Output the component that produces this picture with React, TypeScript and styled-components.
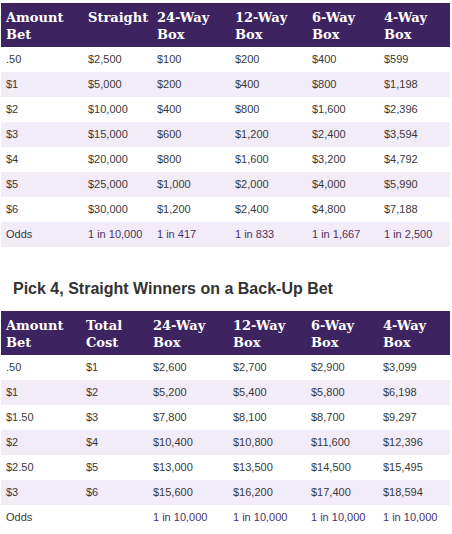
import React from "react";
import styled, { createGlobalStyle } from "styled-components";

const Global = createGlobalStyle`
  html, body { margin: 0; padding: 0; background: #fff; }
  body { font-family: "Liberation Sans", Arial, sans-serif; }
`;

const Page = styled.div`
  padding: 3px 0 0 1px;
  width: 449px;
`;

const Table = styled.div<{ $cols: string }>`
  display: grid;
  grid-template-columns: ${(p) => p.$cols};
  width: 449px;
`;

const HeadCell = styled.div`
  background: #3e2361;
  color: #fff;
  font-family: Georgia, "DejaVu Serif", serif;
  font-weight: bold;
  font-size: 13px;
  line-height: 17px;
  height: 44px;
  box-sizing: border-box;
  padding: 6px 0 0 5px;
  white-space: nowrap;
`;

const Cell = styled.div<{ $alt: boolean; $odds?: boolean }>`
  background: ${(p) => (p.$alt ? "#f2ecf8" : "#fff")};
  color: ${(p) => (p.$odds ? "#4d3366" : "#3a3a3a")};
  font-size: 11px;
  line-height: 25px;
  height: 25px;
  padding-left: 5px;
  white-space: nowrap;
`;

const Title = styled.h3`
  margin: 0;
  padding: 33px 0 0 12px;
  height: 31px;
  font-family: "Liberation Sans", Arial, sans-serif;
  font-size: 16px;
  font-weight: bold;
  color: #333;
  line-height: 18px;
`;

type Data = { head: [string, string][]; rows: string[][] };

const t1: Data = {
  head: [
    ["Amount", "Bet"],
    ["Straight", ""],
    ["24-Way", "Box"],
    ["12-Way", "Box"],
    ["6-Way", "Box"],
    ["4-Way", "Box"],
  ],
  rows: [
    [".50", "$2,500", "$100", "$200", "$400", "$599"],
    ["$1", "$5,000", "$200", "$400", "$800", "$1,198"],
    ["$2", "$10,000", "$400", "$800", "$1,600", "$2,396"],
    ["$3", "$15,000", "$600", "$1,200", "$2,400", "$3,594"],
    ["$4", "$20,000", "$800", "$1,600", "$3,200", "$4,792"],
    ["$5", "$25,000", "$1,000", "$2,000", "$4,000", "$5,990"],
    ["$6", "$30,000", "$1,200", "$2,400", "$4,800", "$7,188"],
    ["Odds", "1 in 10,000", "1 in 417", "1 in 833", "1 in 1,667", "1 in 2,500"],
  ],
};

const t2: Data = {
  head: [
    ["Amount", "Bet"],
    ["Total", "Cost"],
    ["24-Way", "Box"],
    ["12-Way", "Box"],
    ["6-Way", "Box"],
    ["4-Way", "Box"],
  ],
  rows: [
    [".50", "$1", "$2,600", "$2,700", "$2,900", "$3,099"],
    ["$1", "$2", "$5,200", "$5,400", "$5,800", "$6,198"],
    ["$1.50", "$3", "$7,800", "$8,100", "$8,700", "$9,297"],
    ["$2", "$4", "$10,400", "$10,800", "$11,600", "$12,396"],
    ["$2.50", "$5", "$13,000", "$13,500", "$14,500", "$15,495"],
    ["$3", "$6", "$15,600", "$16,200", "$17,400", "$18,594"],
    ["Odds", "", "1 in 10,000", "1 in 10,000", "1 in 10,000", "1 in 10,000"],
  ],
};

function Payout({ data, cols }: { data: Data; cols: string }) {
  return (
    <Table $cols={cols}>
      {data.head.map(([a, b], i) => (
        <HeadCell key={"h" + i}>
          {a}
          {b && <br />}
          {b}
        </HeadCell>
      ))}
      {data.rows.map((r, ri) =>
        r.map((c, ci) => {
          const isOdds = r[0] === "Odds";
          return (
            <Cell key={ri + "-" + ci} $alt={ri % 2 === 1} $odds={isOdds && ci > 0}>
              {c}
            </Cell>
          );
        })
      )}
    </Table>
  );
}

export default function App() {
  return (
    <Page>
      <Global />
      <Payout data={t1} cols="82px 69px 78px 77px 72px 71px" />
      <Title>Pick 4, Straight Winners on a Back-Up Bet</Title>
      <Payout data={t2} cols="80px 67px 80px 78px 72px 72px" />
    </Page>
  );
}
